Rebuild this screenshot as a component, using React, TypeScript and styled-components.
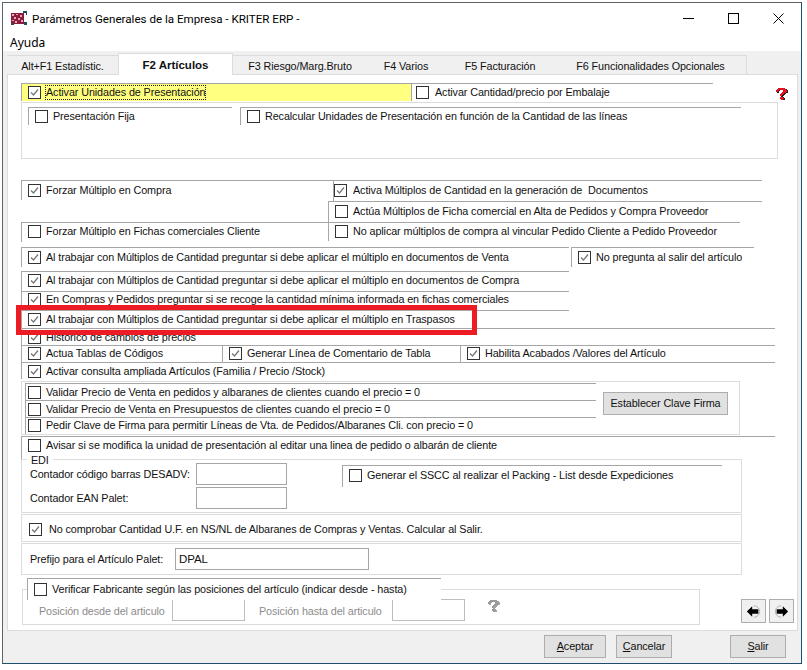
import React from "react";
import styled, { createGlobalStyle } from "styled-components";

const GlobalStyle = createGlobalStyle`
  html, body { margin: 0; padding: 0; background: #fff; }
  body { font-family: "Liberation Sans", Arial, sans-serif; font-size: 10.8px; letter-spacing: -0.1px; color: #111; }
`;

const LINE = "#a6a6a6";
const SOFT = "#dcdcdc";

const Page = styled.div`
  width: 807px;
  height: 670px;
  padding: 2px 0 0 2px;
  box-sizing: border-box;
  overflow: hidden;
`;

const Win = styled.div`
  position: relative;
  width: 800px;
  height: 662px;
  box-sizing: border-box;
  border: 1px solid #5c6368;
  border-color: #5c6368 #1c4f6e #1c4f6e #5c6368;
  background: #f0f0f0;
  display: flex;
  flex-direction: column;
`;

const TitleBar = styled.div`
  height: 31px;
  padding-bottom: 2px;
  flex: none;
  background: #fff;
  display: flex;
  align-items: center;
  padding-left: 8px;
`;

const TitleText = styled.span`
  font-family: Roboto, "Noto Sans", sans-serif;
  font-size: 11.6px;
  letter-spacing: 0;
  margin-left: 4px;
  color: #000;
`;

const Caption = styled.div`
  margin-left: auto;
  display: flex;
`;

const CapBtn = styled.div`
  width: 45px;
  height: 30px;
  display: flex;
  align-items: center;
  justify-content: center;
`;

const MenuBar = styled.div`
  height: 15px;
  flex: none;
  background: #fff;
  padding-left: 7px;
  font-family: "Noto Sans", sans-serif;
  font-size: 12px;
  letter-spacing: 0;
  line-height: 14px;
  color: #000;
`;

const TabStrip = styled.div`
  height: 23px;
  flex: none;
  display: flex;
  align-items: flex-end;
  padding-left: 4px;
  position: relative;
  z-index: 1;
`;

const Tab = styled.div<{ $w: number; $active?: boolean }>`
  width: ${(p) => p.$w}px;
  height: ${(p) => (p.$active ? 22 : 19)}px;
  box-sizing: border-box;
  margin-bottom: ${(p) => (p.$active ? -1 : 0)}px;
  border-top: 1px solid ${SOFT};
  ${(p) => p.$active && `border-left: 1px solid ${SOFT}; border-right: 1px solid ${SOFT};`}
  background: ${(p) => (p.$active ? "#fff" : "#f0f0f0")};
  font-weight: ${(p) => (p.$active ? 700 : 400)};
  ${(p) => p.$active && "font-size: 11.5px; letter-spacing: 0;"}
  text-align: center;
  line-height: ${(p) => (p.$active ? 23 : 20)}px;
  white-space: nowrap;
  &:last-child { border-right: 1px solid ${SOFT}; }
`;

const Panel = styled.div`
  width: 791px;
  height: 557px;
  margin-left: 4px;
  flex: none;
  box-sizing: border-box;
  border: 1px solid ${SOFT};
  background: #fff;
  padding: 8px 0 0 13px;
`;

const Row = styled.div<{ $top?: number; $left?: number }>`
  display: flex;
  align-items: flex-start;
  margin-top: ${(p) => p.$top ?? 0}px;
  margin-left: ${(p) => p.$left ?? 0}px;
`;

const Col = styled.div<{ $w?: number }>`
  display: flex;
  flex-direction: column;
  flex: none;
  ${(p) => p.$w && `width: ${p.$w}px;`}
`;

const Line = styled.div<{
  $w: number;
  $h: number;
  $pl?: number;
  $pt?: number;
  $bg?: string;
  $noTop?: boolean;
  $mb?: number;
  $ml?: number;
  $mt?: number;
}>`
  width: ${(p) => p.$w}px;
  height: ${(p) => p.$h}px;
  margin: ${(p) => p.$mt ?? 0}px 0 ${(p) => p.$mb ?? 0}px ${(p) => p.$ml ?? 0}px;
  flex: none;
  box-sizing: border-box;
  border-left: 1px solid ${LINE};
  border-top: ${(p) => (p.$noTop ? "none" : `1px solid ${LINE}`)};
  background: ${(p) => p.$bg ?? "#fff"};
  padding: ${(p) => p.$pt ?? 3}px 0 0 ${(p) => p.$pl ?? 6}px;
  display: flex;
  align-items: flex-start;
  overflow: hidden;
`;

const Box = styled.span`
  width: 13px;
  height: 13px;
  flex: none;
  box-sizing: border-box;
  border: 1px solid #333;
  background: #fff;
  display: block;
`;

const Text = styled.span<{ $gap?: number; $focus?: boolean }>`
  margin-left: ${(p) => p.$gap ?? 5}px;
  line-height: 13px;
  height: 13px;
  white-space: pre;
  ${(p) => p.$focus && "outline: 1px dotted #222; outline-offset: 0;"}
`;

const Group = styled.div<{ $w: number; $h: number; $top?: number; $pt?: number; $pl?: number }>`
  position: relative;
  width: ${(p) => p.$w}px;
  height: ${(p) => p.$h}px;
  flex: none;
  margin-top: ${(p) => p.$top ?? 0}px;
  box-sizing: border-box;
  border: 1px solid ${SOFT};
  padding: ${(p) => p.$pt ?? 0}px 0 0 ${(p) => p.$pl ?? 0}px;
  display: flex;
  align-items: flex-start;
`;

const Legend = styled.span`
  position: absolute;
  top: -6px;
  left: 5px;
  padding: 0 4px;
  background: #fff;
  line-height: 13px;
`;

const Cell = styled.div<{ $w: number }>`
  width: ${(p) => p.$w}px;
  height: 16px;
  flex: none;
  box-sizing: border-box;
  border-left: 1px solid ${LINE};
  padding: 1px 0 0 6px;
  display: flex;
  overflow: hidden;
`;

const Ruled = styled.div`
  width: 754px;
  height: 18px;
  box-sizing: border-box;
  border-top: 1px solid ${LINE};
  border-bottom: 1px solid ${LINE};
  display: flex;
`;

const Field = styled.div<{ $w: number; $dim?: boolean }>`
  width: ${(p) => p.$w}px;
  height: 22px;
  flex: none;
  box-sizing: border-box;
  border: 1px solid ${(p) => (p.$dim ? "#bdbdbd" : LINE)};
  background: #fff;
  padding: 0 3px;
  line-height: 20px;
  font-size: 11.5px;
`;

const FieldRow = styled.div<{ $mt?: number }>`
  display: flex;
  align-items: center;
  margin-top: ${(p) => p.$mt ?? 0}px;
`;

const Label = styled.span<{ $w?: number; $dim?: boolean; $ml?: number }>`
  ${(p) => p.$w && `width: ${p.$w}px;`}
  margin-left: ${(p) => p.$ml ?? 0}px;
  ${(p) => p.$dim && "padding-top: 1px;"}
  flex: none;
  white-space: nowrap;
  color: ${(p) => (p.$dim ? "#8c8c8c" : "inherit")};
`;

const FlatBtn = styled.div<{ $w: number; $ml?: number; $mt?: number }>`
  width: ${(p) => p.$w}px;
  height: 23px;
  flex: none;
  margin-left: ${(p) => p.$ml ?? 0}px;
  margin-top: ${(p) => p.$mt ?? 0}px;
  box-sizing: border-box;
  border: 1px solid #adadad;
  background: #e1e1e1;
  text-align: center;
  line-height: 21px;
  white-space: nowrap;
`;

const CheckOverlay = styled.div`
  position: absolute;
  top: -12px;
  left: 4px;
  width: 414px;
  height: 22px;
  box-sizing: border-box;
  border-top: 1px solid ${LINE};
  border-left: 1px solid ${LINE};
  background: #fff;
  padding: 4px 0 0 6px;
  display: flex;
`;

const HelpSlot = styled.span<{ $ml: number; $mt?: number }>`
  margin-left: ${(p) => p.$ml}px;
  margin-top: ${(p) => p.$mt ?? 0}px;
  display: block;
  flex: none;
  line-height: 0;
`;

const NavBtn = styled.div<{ $ml: number }>`
  width: 25px;
  height: 24px;
  flex: none;
  margin-left: ${(p) => p.$ml}px;
  margin-top: 10px;
  box-sizing: border-box;
  border: 1px solid #adadad;
  background: #f0f0f0;
  display: flex;
  align-items: center;
  justify-content: center;
`;

const Footer = styled.div`
  flex: 1;
  display: flex;
  align-items: flex-start;
  padding: 4px 0 0 541px;
`;

const RedMark = styled.div`
  position: absolute;
  left: 13px;
  top: 302px;
  width: 461px;
  height: 30px;
  box-sizing: border-box;
  border: 5px solid #ed1c24;
  pointer-events: none;
`;

const FlipSvg = styled.svg<{ $flip?: boolean }>`
  ${(p) => p.$flip && "transform: scaleX(-1);"}
`;

const Check = ({ on }: { on?: boolean }) => (
  <Box>
    {on && (
      <svg width="11" height="11" viewBox="0 0 11 11">
        <path d="M2 5.5 L4.5 8 L9 2.5" fill="none" stroke="#777" strokeWidth="1.3" />
      </svg>
    )}
  </Box>
);

const Opt = ({ on, children, gap, focus }: { on?: boolean; children: React.ReactNode; gap?: number; focus?: boolean }) => (
  <>
    <Check on={on} />
    <Text $gap={gap} $focus={focus}>{children}</Text>
  </>
);

// pixel icon, R = main colour, K = shadow
const HELP_PIXELS = [
  "...RRRRRRR.....",
  "..RRRRRRRRRK...",
  ".RRRK...RRRRK..",
  ".RRK....RRRRK..",
  "..KK...RRRRKK..",
  "......RRRKK....",
  ".....RRRKK.....",
  ".....RRKK......",
  "......KK.......",
  ".....RRRK......",
  ".....RRRRK.....",
  "......RRKK.....",
];

const Help = ({ dim }: { dim?: boolean }) => {
  const main = dim ? "#9a9a9a" : "#e8101c";
  const shade = dim ? "#a8a8a8" : "#222";
  return (
    <svg width="15" height="12" viewBox="0 0 15 12" shapeRendering="crispEdges">
      {HELP_PIXELS.map((row, y) =>
        row.split("").map((c, x) =>
          c === "." ? null : <rect key={`${x}-${y}`} x={x} y={y} width="1" height="1" fill={c === "R" ? main : shade} />
        )
      )}
    </svg>
  );
};

const Arrow = ({ right }: { right?: boolean }) => (
  <FlipSvg $flip={right} width="15" height="15" viewBox="0 0 17 17">
    <path d="M9 2 A6.5 6.5 0 0 1 9 15" fill="none" stroke="#aaa" strokeWidth="1" />
    <path d="M1 8.5 L7 2.5 V6 H14 V11 H7 V14.5 Z" fill="#000" />
  </FlipSvg>
);

const AppIcon = () => (
  <svg width="17" height="15" viewBox="0 0 17 15" shapeRendering="crispEdges">
    <rect x="0" y="2" width="13" height="11" fill="#8d1c3c" />
    <path d="M1 3h2v2h-2zM5 3h2v1h-2zM9 4h2v2h-2zM3 6h2v2h-2zM7 7h2v2h-2zM1 9h2v1h-2zM10 9h2v2h-2zM4 10h2v2h-2z" fill="#e3a9b8" />
    <path d="M12 0h4v4h-1v-2h-3zM13 11h3v3h-3z" fill="#1d4d5e" />
    <path d="M0 12h3v2h-3z" fill="#444" />
  </svg>
);

export default function App() {
  return (
    <Page>
      <GlobalStyle />
      <Win>
        <TitleBar>
          <AppIcon />
          <TitleText>Parámetros Generales de la Empresa - KRITER ERP -</TitleText>
          <Caption>
            <CapBtn>
              <svg width="11" height="11" viewBox="0 0 11 11"><path d="M0 5.5H11" stroke="#000" /></svg>
            </CapBtn>
            <CapBtn>
              <svg width="11" height="11" viewBox="0 0 11 11"><rect x=".5" y=".5" width="10" height="10" fill="none" stroke="#000" /></svg>
            </CapBtn>
            <CapBtn>
              <svg width="11" height="11" viewBox="0 0 11 11"><path d="M.5 .5L10.5 10.5M10.5 .5L.5 10.5" stroke="#000" /></svg>
            </CapBtn>
          </Caption>
        </TitleBar>
        <MenuBar>Ayuda</MenuBar>
        <TabStrip>
          <Tab $w={111}>Alt+F1 Estadístic.</Tab>
          <Tab $w={115} $active>F2 Artículos</Tab>
          <Tab $w={134}>F3 Riesgo/Marg.Bruto</Tab>
          <Tab $w={78}>F4 Varios</Tab>
          <Tab $w={110}>F5 Facturación</Tab>
          <Tab $w={192}>F6 Funcionalidades Opcionales</Tab>
        </TabStrip>
        <Panel>
          <Row>
            <Line $w={390} $h={18} $pt={2} $bg="#ffff80">
              <Opt on focus>Activar Unidades de Presentación</Opt>
            </Line>
            <Line $w={302} $h={18} $pt={2} $pl={4}>
              <Opt gap={6}>Activar Cantidad/precio por Embalaje</Opt>
            </Line>
            <HelpSlot $ml={62} $mt={5}><Help /></HelpSlot>
          </Row>
          <Group $w={757} $h={57} $top={1} $pt={4} $pl={6}>
            <Line $w={204} $h={18} $pt={2}>
              <Opt>Presentación Fija</Opt>
            </Line>
            <Line $w={501} $h={18} $pt={2} $ml={8}>
              <Opt>Recalcular Unidades de Presentación en función de la Cantidad de las líneas</Opt>
            </Line>
          </Group>

          <Row $top={21}>
            <Line $w={312} $h={20}><Opt on>Forzar Múltiplo en Compra</Opt></Line>
            <Line $w={429} $h={21} $pl={0}><Opt on gap={6}>Activa Múltiplos de Cantidad en la generación de  Documentos</Opt></Line>
          </Row>
          <Row $left={307}>
            <Line $w={434} $h={21}><Opt>Actúa Múltiplos de Ficha comercial en Alta de Pedidos y Compra Proveedor</Opt></Line>
          </Row>
          <Row>
            <Line $w={307} $h={20} $pt={2}><Opt>Forzar Múltiplo en Fichas comerciales Cliente</Opt></Line>
            <Line $w={412} $h={19} $pt={2} $mb={6}><Opt>No aplicar múltiplos de compra al vincular Pedido Cliente a Pedido Proveedor</Opt></Line>
          </Row>

          <Row>
            <Col $w={548}>
              <Line $w={548} $h={20} $mb={4}><Opt on>Al trabajar con Múltiplos de Cantidad preguntar si debe aplicar el múltiplo en documentos de Venta</Opt></Line>
              <Line $w={548} $h={20} $pt={2}><Opt on>Al trabajar con Múltiplos de Cantidad preguntar si debe aplicar el múltiplo en documentos de Compra</Opt></Line>
              <Line $w={548} $h={19} $pt={1}><Opt on>En Compras y Pedidos preguntar si se recoge la cantidad mínima informada en fichas comerciales</Opt></Line>
              <Line $w={548} $h={18} $pt={2}><Opt on>Al trabajar con Múltiplos de Cantidad preguntar si debe aplicar el múltiplo en Traspasos</Opt></Line>
            </Col>
            <Line $w={183} $h={20} $ml={2}><Opt on>No pregunta al salir del artículo</Opt></Line>
          </Row>

          <Line $w={754} $h={17} $pt={2}><Opt on>Historico de cambios de precios</Opt></Line>
          <Ruled>
            <Cell $w={201}><Opt on>Actua Tablas de Códigos</Opt></Cell>
            <Cell $w={238}><Opt on>Generar Línea de Comentario de Tabla</Opt></Cell>
            <Cell $w={315}><Opt on>Habilita Acabados /Valores del Artículo</Opt></Cell>
          </Ruled>
          <Line $w={400} $h={16} $noTop $pt={2}><Opt on>Activar consulta ampliada Artículos (Familia / Precio /Stock)</Opt></Line>

          <Group $w={719} $h={54} $top={2} $pt={1} $pl={3}>
            <Col $w={571}>
              <Line $w={571} $h={17} $pl={2} $pt={2}><Opt>Validar Precio de Venta en pedidos y albaranes de clientes cuando el precio = 0</Opt></Line>
              <Line $w={571} $h={17} $pl={2} $pt={2}><Opt>Validar Precio de Venta en Presupuestos de clientes cuando el precio = 0</Opt></Line>
              <Line $w={571} $h={17} $pl={2} $pt={1}><Opt>Pedir Clave de Firma para permitir Líneas de Vta. de Pedidos/Albaranes Cli. con precio = 0</Opt></Line>
            </Col>
            <FlatBtn $w={125} $ml={7} $mt={9}>Establecer Clave Firma</FlatBtn>
          </Group>
          <Row $top={1}>
            <Line $w={754} $h={23} $pt={2}><Opt>Avisar si se modifica la unidad de presentación al editar una linea de pedido o albarán de cliente</Opt></Line>
          </Row>

          <Group $w={721} $h={54} $pt={3} $pl={8}>
            <Legend>EDI</Legend>
            <Col $w={312}>
              <FieldRow>
                <Label $w={166}>Contador código barras DESADV:</Label>
                <Field $w={91} />
              </FieldRow>
              <FieldRow $mt={2}>
                <Label $w={166}>Contador EAN Palet:</Label>
                <Field $w={91} />
              </FieldRow>
            </Col>
            <Line $w={380} $h={22} $pt={3} $mt={2}><Opt>Generar el SSCC al realizar el Packing - List desde Expediciones</Opt></Line>
          </Group>

          <Group $w={721} $h={28} $top={1} $pt={8} $pl={7}>
            <Opt on gap={7}>No comprobar Cantidad U.F. en NS/NL de Albaranes de Compras y Ventas. Calcular al Salir.</Opt>
          </Group>

          <Group $w={721} $h={32} $top={1} $pt={4} $pl={8}>
            <FieldRow>
              <Label $w={145}>Prefijo para el Artículo Palet:</Label>
              <Field $w={194}>DPAL</Field>
            </FieldRow>
          </Group>

          <Row $left={1} $top={14}>
            <Group $w={678} $h={36} $pt={9} $pl={16}>
              <CheckOverlay><Opt>Verificar Fabricante según las posiciones del artículo (indicar desde - hasta)</Opt></CheckOverlay>
              <FieldRow>
                <Label $w={133} $dim>Posición desde del articulo</Label>
                <Field $w={73} $dim />
                <Label $w={133} $dim $ml={14}>Posición hasta del articulo</Label>
                <Field $w={73} $dim />
              </FieldRow>
              <HelpSlot $ml={22} $mt={1}><Help dim /></HelpSlot>
            </Group>
            <NavBtn $ml={41}><Arrow /></NavBtn>
            <NavBtn $ml={3}><Arrow right /></NavBtn>
          </Row>
        </Panel>
        <Footer>
          <FlatBtn $w={62}><u>A</u>ceptar</FlatBtn>
          <FlatBtn $w={56} $ml={10}><u>C</u>ancelar</FlatBtn>
          <FlatBtn $w={56} $ml={58}><u>S</u>alir</FlatBtn>
        </Footer>
        <RedMark />
      </Win>
    </Page>
  );
}
